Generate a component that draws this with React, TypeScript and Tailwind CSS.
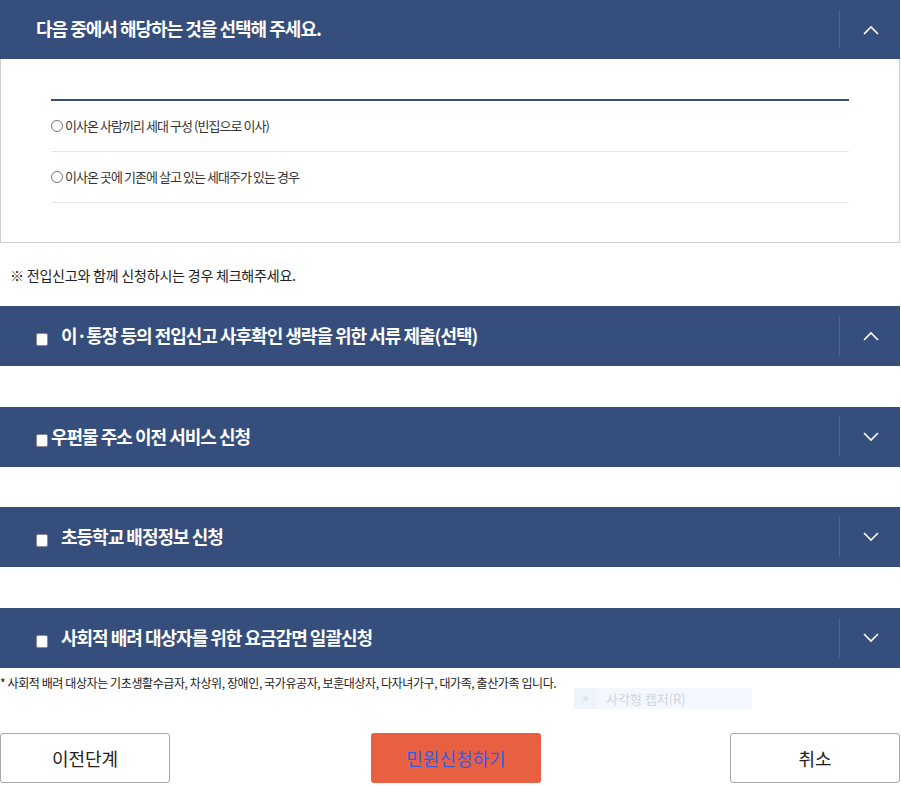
import React from "react";

const FONT = "font-['Noto_Sans_CJK_KR','Noto_Sans',sans-serif]";

function Chevron({ up }: { up: boolean }) {
  return (
    <svg width="16" height="10" viewBox="0 0 16 10" fill="none">
      <polyline
        points={up ? "1,9 8,2 15,9" : "1,1 8,8 15,1"}
        stroke="#ffffff"
        strokeWidth="1.6"
      />
    </svg>
  );
}

function Check() {
  return (
    <span className="inline-block w-[12px] h-[13px] bg-white border border-[#8d8d8d] rounded-[2px] shrink-0" />
  );
}

function Bar({
  title,
  up,
  check,
  tight,
  short,
  className = "",
}: {
  title: string;
  up: boolean;
  check?: boolean;
  tight?: boolean;
  short?: boolean;
  className?: string;
}) {
  return (
    <div className={`flex ${short ? "h-[59px]" : "h-[60px]"} bg-[#354e7b] ${className}`}>
      <div className="flex flex-1 items-center pl-[36px]">
        {check && (
          <span className={`mt-[6px] ${tight ? "mr-[3px]" : "mr-[13px]"}`}>
            <Check />
          </span>
        )}
        <span className="text-white text-[18px] font-bold tracking-[-1px] -mt-[2px]">{title}</span>
      </div>
      <div className="w-[61px] my-[10px] border-l border-[#4d6590] flex items-center justify-center pl-[1px]">
        <Chevron up={up} />
      </div>
    </div>
  );
}

function Radio({ label }: { label: string }) {
  return (
    <div className="flex items-center h-[51px] border-b border-[#e6e6e6]">
      <span className="inline-block w-[12px] h-[12px] rounded-full border border-[#777] bg-white mr-[2px]" />
      <span className="text-[13px] text-[#333] tracking-[-0.95px]">{label}</span>
    </div>
  );
}

export default function App() {
  return (
    <div className={`w-[901px] min-h-[786px] bg-white relative ${FONT}`}>
      <div className="w-[900px]">
        <Bar title="다음 중에서 해당하는 것을 선택해 주세요." up short />

        {/* selection box */}
        <div className="border border-t-0 border-[#cfcfcf] px-[50px] pt-[40px] pb-[39px]">
          <div className="h-[2px] bg-[#354e7b]" />
          <Radio label="이사온 사람끼리 세대 구성 (빈집으로 이사)" />
          <Radio label="이사온 곳에 기존에 살고 있는 세대주가 있는 경우" />
        </div>

        <p className="pl-[10px] pt-[22px] h-[63px] text-[14px] leading-[20px] text-[#222] tracking-[-0.2px]">
          ※ 전입신고와 함께 신청하시는 경우 체크해주세요.
        </p>

        <Bar title="이·통장 등의 전입신고 사후확인 생략을 위한 서류 제출(선택)" up check />
        <Bar title="우편물 주소 이전 서비스 신청" up={false} check tight className="mt-[41px]" />
        <Bar title="초등학교 배정정보 신청" up={false} check className="mt-[40px]" />
        <Bar title="사회적 배려 대상자를 위한 요금감면 일괄신청" up={false} check className="mt-[41px]" />

        <p className="pt-[6px] text-[12px] leading-[17px] text-[#222] tracking-[-0.4px]">
          * 사회적 배려 대상자는 기초생활수급자, 차상위, 장애인, 국가유공자, 보훈대상자, 다자녀가구, 대가족, 출산가족 입니다.
        </p>

        {/* footer buttons */}
        <div className="flex mt-[42px]">
          <button className="w-[170px] h-[50px] border border-[#a9a9a9] rounded-[3px] bg-white text-[18px] text-[#222]">
            이전단계
          </button>
          <button className="w-[170px] h-[50px] ml-[201px] rounded-[3px] bg-[#e95f42] text-[18px] text-[#2f5fe0]">
            민원신청하기
          </button>
          <button className="w-[170px] h-[50px] ml-auto border border-[#a9a9a9] rounded-[3px] bg-white text-[18px] text-[#222]">
            취소
          </button>
        </div>
      </div>

      {/* capture tooltip overlay */}
      <div className="absolute left-[574px] top-[688px] w-[178px] h-[21px] flex items-center bg-[#f4f8fe]">
        <div className="w-[22px] h-full flex items-center justify-center bg-[#eef4fc]">
          <span className="w-[5px] h-[5px] rounded-full bg-[#dfe5ee]" />
        </div>
        <span className="ml-[10px] text-[13px] text-[#cfd5dd]">사각형 캡처(R)</span>
      </div>
    </div>
  );
}
